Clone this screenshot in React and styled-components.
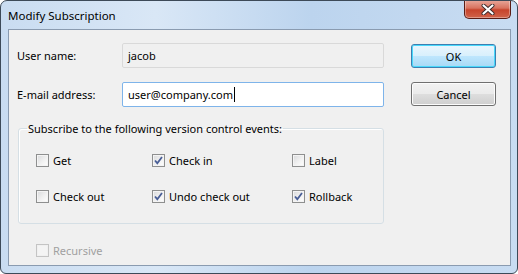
import React, { useState } from 'react';
import styled, { createGlobalStyle } from 'styled-components';

const GlobalStyle = createGlobalStyle`
    html, body {
        margin: 0;
        padding: 0;
        background: #ffffff;
    }
    body {
        font-family: "Noto Sans", "Open Sans", sans-serif;
        font-size: 11px;
        color: #000;
    }
`;

const Window = styled.div`
    width: 518px;
    height: 274px;
    box-sizing: border-box;
    display: flex;
    flex-direction: column;
    border: 1px solid #3d4a58;
    border-radius: 7px 7px 6px 6px;
    background: linear-gradient(90deg, #c9dcf1 0%, #d9e7f6 30%, #bcd4ee 60%, #c8dcf2 100%);
    overflow: hidden;
`;

const TitleBar = styled.div`
    height: 28px;
    display: flex;
    align-items: flex-start;
    justify-content: space-between;
    padding: 0 6px 0 7px;
    flex-shrink: 0;
`;

const Title = styled.div`
    padding-top: 7px;
    font-size: 11.5px;
    color: #000;
`;

const CloseButton = styled.button`
    width: 47px;
    height: 19px;
    margin-top: -1px;
    border: 1px solid #5a1d16;
    border-top: none;
    border-radius: 0 0 5px 5px;
    background: linear-gradient(180deg, #e9a99c 0%, #d9735f 45%, #c7442c 55%, #d0634a 100%);
    box-shadow: inset 0 0 0 1px rgba(255, 255, 255, 0.35);
    display: flex;
    align-items: center;
    justify-content: center;
    padding: 0;
`;

const Client = styled.div`
    flex: 1;
    margin: 0 6px 7px 7px;
    border: 1px solid #8a9bb0;
    background: #f0f0f0;
    display: flex;
    justify-content: space-between;
    padding: 13px 14px 0 8px;
`;

const FormColumn = styled.div`
    display: flex;
    flex-direction: column;
    width: 367px;
`;

const FieldGrid = styled.div`
    display: grid;
    grid-template-columns: 105px 262px;
    row-gap: 14px;
    align-items: center;
`;

const Label = styled.label`
    font-size: 11px;
    color: #000;
`;

const TextBox = styled.div`
    height: 25px;
    box-sizing: border-box;
    border: 1px solid ${(p) => (p.focused ? '#7eb4ea' : '#d9d9d9')};
    border-radius: 2px;
    background: ${(p) => (p.focused ? '#ffffff' : '#f0f0f0')};
    display: flex;
    align-items: center;
    padding: 0 5px;
    font-size: 11px;
    color: #000;
`;

const Caret = styled.span`
    display: inline-block;
    width: 1px;
    height: 15px;
    background: #000;
    margin-left: 1px;
`;

const Group = styled.fieldset`
    margin: 14px 0 0 1px;
    padding: 0 8px 0 8px;
    border: 1px solid #d5dfe5;
    border-radius: 3px;
    box-shadow: inset 1px 1px 0 #ffffff;
`;

const Legend = styled.legend`
    padding: 0 1px;
    margin-left: 0;
    font-size: 11px;
    color: #000;
`;

const CheckGrid = styled.div`
    display: grid;
    grid-template-columns: 116px 140px auto;
    row-gap: 16px;
    padding: 14px 0 17px 9px;
`;

const CheckRow = styled.label`
    display: flex;
    align-items: center;
    gap: 4px;
    height: 20px;
    font-size: 11px;
    color: ${(p) => (p.disabled ? '#a0a0a0' : '#000')};
`;

const Box = styled.span`
    width: 13px;
    height: 13px;
    box-sizing: border-box;
    border: 1px solid ${(p) => (p.disabled ? '#c4c4c4' : '#8e8f8f')};
    background: ${(p) =>
        p.disabled
            ? '#f4f4f4'
            : 'linear-gradient(135deg, #d8d9db 0%, #f1f1f1 55%, #ffffff 100%)'};
    box-shadow: inset 0 0 0 1px ${(p) => (p.disabled ? '#f0f0f0' : '#f4f4f4')};
    display: flex;
    align-items: center;
    justify-content: center;
    flex-shrink: 0;
`;

const Footer = styled.div`
    padding: 16px 0 0 19px;
`;

const ButtonColumn = styled.div`
    display: flex;
    flex-direction: column;
    gap: 14px;
    padding-top: 1px;
`;

const DialogButton = styled.button`
    width: 85px;
    height: 24px;
    box-sizing: border-box;
    border: 1px solid ${(p) => (p.primary ? '#3c7fb1' : '#707070')};
    border-radius: 3px;
    background: ${(p) =>
        p.primary
            ? 'linear-gradient(180deg, #eaf6fd 0%, #d9f0fc 48%, #bee6fd 52%, #a7d9f5 100%)'
            : 'linear-gradient(180deg, #f2f2f2 0%, #ebebeb 48%, #dddddd 52%, #cfcfcf 100%)'};
    box-shadow: inset 0 0 0 1px ${(p) => (p.primary ? '#48d8fb' : '#fcfcfc')};
    font-family: inherit;
    font-size: 11px;
    color: #000;
    padding: 0;
`;

const CheckMark = () => (
    <svg width="9" height="9" viewBox="0 0 9 9">
        <path d="M1 4.5 L3.3 7.2 L8 1" fill="none" stroke="#4a5f97" strokeWidth="1.8" />
    </svg>
);

const Check = ({ label, checked, disabled }) => (
    <CheckRow disabled={disabled}>
        <Box disabled={disabled}>{checked && <CheckMark />}</Box>
        {label}
    </CheckRow>
);

const events = [
    { label: 'Get', checked: false },
    { label: 'Check in', checked: true },
    { label: 'Label', checked: false },
    { label: 'Check out', checked: false },
    { label: 'Undo check out', checked: true },
    { label: 'Rollback', checked: true },
];

const App = () => {
    const [email] = useState('user@company.com');

    return (
        <>
            <GlobalStyle />
            <Window>
                <TitleBar>
                    <Title>Modify Subscription</Title>
                    <CloseButton aria-label="Close">
                        <svg width="14" height="11" viewBox="0 0 14 11">
                            <path
                                d="M2.5 1.5 L11.5 9.5 M11.5 1.5 L2.5 9.5"
                                stroke="#3b2a2a"
                                strokeWidth="4"
                                strokeLinecap="round"
                            />
                            <path
                                d="M2.5 1.5 L11.5 9.5 M11.5 1.5 L2.5 9.5"
                                stroke="#ffffff"
                                strokeWidth="2.2"
                                strokeLinecap="round"
                            />
                        </svg>
                    </CloseButton>
                </TitleBar>
                <Client>
                    <FormColumn>
                        <FieldGrid>
                            <Label>User name:</Label>
                            <TextBox>jacob</TextBox>
                            <Label>E-mail address:</Label>
                            <TextBox focused>
                                {email}
                                <Caret />
                            </TextBox>
                        </FieldGrid>
                        <Group>
                            <Legend>Subscribe to the following version control events:</Legend>
                            <CheckGrid>
                                {events.map((e) => (
                                    <Check key={e.label} label={e.label} checked={e.checked} />
                                ))}
                            </CheckGrid>
                        </Group>
                        <Footer>
                            <Check label="Recursive" disabled />
                        </Footer>
                    </FormColumn>
                    <ButtonColumn>
                        <DialogButton primary>OK</DialogButton>
                        <DialogButton>Cancel</DialogButton>
                    </ButtonColumn>
                </Client>
            </Window>
        </>
    );
};

export default App;
